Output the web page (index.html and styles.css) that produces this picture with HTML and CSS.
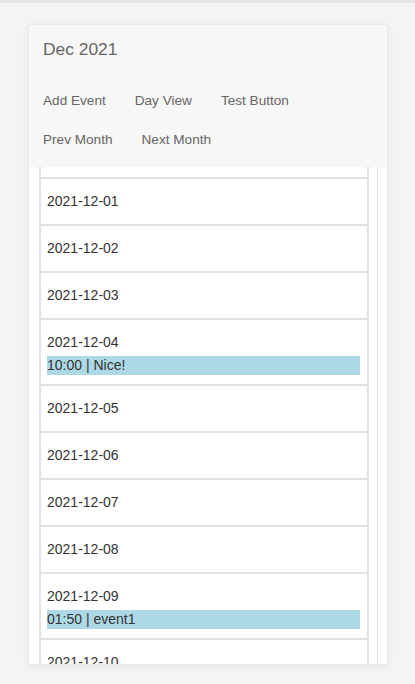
FILE: index.html
```html
<!DOCTYPE html>
<html lang="en">
<head>
<meta charset="utf-8">
<title>Calendar</title>
<link rel="stylesheet" href="styles.css">
</head>
<body>
<div class="topbar"></div>
<div class="page">
  <div class="card">
    <div class="card-header">
      <div class="title">Dec 2021</div>
      <div class="actions">
        <span class="btn">Add Event</span>
        <span class="btn">Day View</span>
        <span class="btn">Test Button</span>
        <span class="btn">Prev Month</span>
        <span class="btn">Next Month</span>
      </div>
    </div>
    <div class="card-body">
      <div class="scroller">
        <div class="row row-partial"></div>
        <div class="row"><div class="date">2021-12-01</div></div>
        <div class="row"><div class="date">2021-12-02</div></div>
        <div class="row"><div class="date">2021-12-03</div></div>
        <div class="row"><div class="date">2021-12-04</div><div class="event">10:00 | Nice!</div></div>
        <div class="row"><div class="date">2021-12-05</div></div>
        <div class="row"><div class="date">2021-12-06</div></div>
        <div class="row"><div class="date">2021-12-07</div></div>
        <div class="row"><div class="date">2021-12-08</div></div>
        <div class="row"><div class="date">2021-12-09</div><div class="event">01:50 | event1</div></div>
        <div class="row"><div class="date">2021-12-10</div></div>
        <div class="row"><div class="date">2021-12-11</div></div>
      </div>
    </div>
  </div>
</div>
</body>
</html>
```
FILE: styles.css
```css
html, body {
  margin: 0;
  padding: 0;
}
body {
  background: #f4f4f4;
  font-family: "Liberation Sans", Arial, sans-serif;
  height: 684px;
  overflow: hidden;
}
.topbar {
  height: 3px;
  background: #e4e4e4;
}
.page {
  padding: 21px 0 0 28px;
}
.card {
  width: 358px;
  height: 639px;
  background: #fff;
  border: 1px solid #e9e9e9;
  box-shadow: 0 2px 8px rgba(0, 0, 0, 0.06);
  display: flex;
  flex-direction: column;
  overflow: hidden;
}
.card-header {
  background: #f7f7f7;
  padding-bottom: 8px;
  flex: none;
}
.title {
  font-size: 17.4px;
  line-height: 20px;
  color: #666;
  padding: 14px 14px 22px;
}
.actions {
  display: flex;
  flex-wrap: wrap;
}
.btn {
  font-size: 13.6px;
  line-height: 19px;
  padding: 10px 14px 10px 14px;
  margin-right: 1px;
  color: #666;
}
.card-body {
  flex: 1;
  min-height: 0;
  padding: 0 9px 0 10px;
  display: flex;
}
.scroller {
  width: 339px;
  border-right: 1px solid #e2e2e2;
  overflow: hidden;
}
.row {
  border: 2px solid #e2e2e2;
  border-top: none;
  padding: 14px 7px 9px 6px;
  width: 313px;
}
.row-partial {
  padding-top: 0;
  padding-bottom: 0;
  height: 10px;
}
.date {
  font-size: 14px;
  line-height: 17px;
  color: #333;
  margin-bottom: 5px;
}
.event {
  font-size: 14px;
  line-height: 19px;
  color: #333;
  background: #add8e6;
}
```
